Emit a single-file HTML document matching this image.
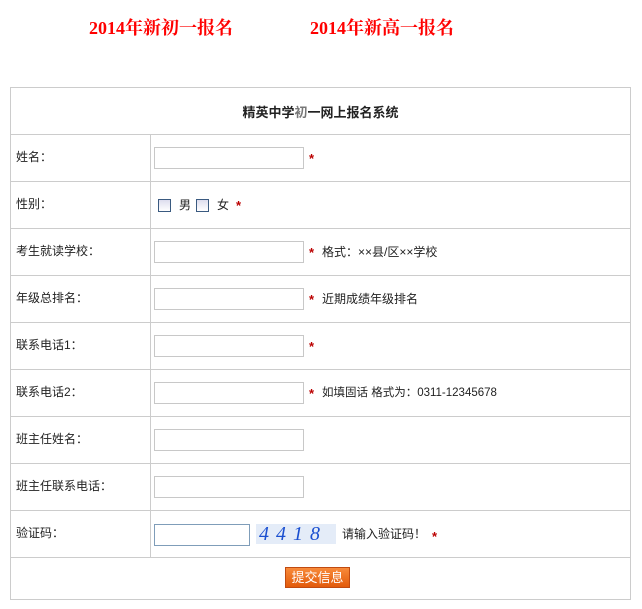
<!DOCTYPE html>
<html><head><meta charset="utf-8"><style>
*{margin:0;padding:0;box-sizing:border-box}
body{width:642px;height:609px;background:#fff;position:relative;font-family:"Liberation Sans","Noto Sans CJK SC",sans-serif;font-size:12px;color:#222;overflow:hidden}
.a{position:absolute}
.top{color:#f00;font-family:"Liberation Serif","Noto Serif CJK SC",serif;font-size:18px;top:14px;font-weight:bold}
.h{left:10px;width:621px;height:1px;background:#ccc}
.v{width:1px;background:#ccc}
.lab{left:16px;line-height:16px}
.in{left:154px;width:150px;height:22px;border:1px solid #c8c8c8;background:#fff}
.st{color:#b00;font-size:13px;font-weight:bold}
.cb{width:13px;height:13px;border:1px solid #3a5a80;background:linear-gradient(#dde,#fff)}
</style></head><body>
<div class="a top" style="left:89px">2014年新初一报名</div>
<div class="a top" style="left:310px">2014年新高一报名</div>
<div class="a h" style="top:87px"></div>
<div class="a h" style="top:134px"></div>
<div class="a h" style="top:181px"></div>
<div class="a h" style="top:228px"></div>
<div class="a h" style="top:275px"></div>
<div class="a h" style="top:322px"></div>
<div class="a h" style="top:369px"></div>
<div class="a h" style="top:416px"></div>
<div class="a h" style="top:463px"></div>
<div class="a h" style="top:510px"></div>
<div class="a h" style="top:557px"></div>
<div class="a h" style="top:599px"></div>
<div class="a v" style="left:10px;top:87px;height:513px"></div>
<div class="a v" style="left:630px;top:87px;height:513px"></div>
<div class="a v" style="left:150px;top:134px;height:423px"></div>
<div class="a" style="left:10px;width:621px;top:102px;text-align:center;font-weight:bold;font-size:13px">精英中学<span style="color:#777">初</span>一网上报名系统</div>
<div class="a lab" style="top:149px">姓名：</div>
<div class="a lab" style="top:196px">性别：</div>
<div class="a lab" style="top:243px">考生就读学校：</div>
<div class="a lab" style="top:290px">年级总排名：</div>
<div class="a lab" style="top:337px">联系电话1：</div>
<div class="a lab" style="top:384px">联系电话2：</div>
<div class="a lab" style="top:431px">班主任姓名：</div>
<div class="a lab" style="top:478px">班主任联系电话：</div>
<div class="a lab" style="top:525px">验证码：</div>
<div class="a in" style="top:147px"></div><div class="a st" style="left:309px;top:151px">*</div>
<div class="a cb" style="left:158px;top:199px"></div><div class="a" style="left:179px;top:196px">男</div>
<div class="a cb" style="left:196px;top:199px"></div><div class="a" style="left:217px;top:196px">女</div><div class="a st" style="left:236px;top:198px">*</div>
<div class="a in" style="top:241px"></div><div class="a st" style="left:309px;top:245px">*</div><div class="a" style="left:322px;top:243px">格式：××县/区××学校</div>
<div class="a in" style="top:288px"></div><div class="a st" style="left:309px;top:292px">*</div><div class="a" style="left:322px;top:290px">近期成绩年级排名</div>
<div class="a in" style="top:335px"></div><div class="a st" style="left:309px;top:339px">*</div>
<div class="a in" style="top:382px"></div><div class="a st" style="left:309px;top:386px">*</div><div class="a" style="left:322px;top:384px;font-size:11.5px">如填固话 格式为：0311-12345678</div>
<div class="a in" style="top:429px"></div>
<div class="a in" style="top:476px"></div>
<div class="a in" style="top:524px;width:96px;border-color:#7f9db9"></div>
<div class="a" style="left:256px;top:524px;width:80px;height:20px;background:#e4ecf8;color:#1a4fd0;font-style:italic;font-size:20px;line-height:20px;letter-spacing:7px;font-family:'Liberation Serif',serif;padding-left:3px">4418</div>
<div class="a" style="left:342px;top:525px">请输入验证码！</div><div class="a st" style="left:432px;top:529px">*</div>
<div class="a" style="left:285px;top:567px;width:65px;height:21px;background:linear-gradient(#f88a3a,#e25a0a);border:1px solid #c04a10;color:#fff;font-size:13px;line-height:19px;text-align:center">提交信息</div>
</body></html>
